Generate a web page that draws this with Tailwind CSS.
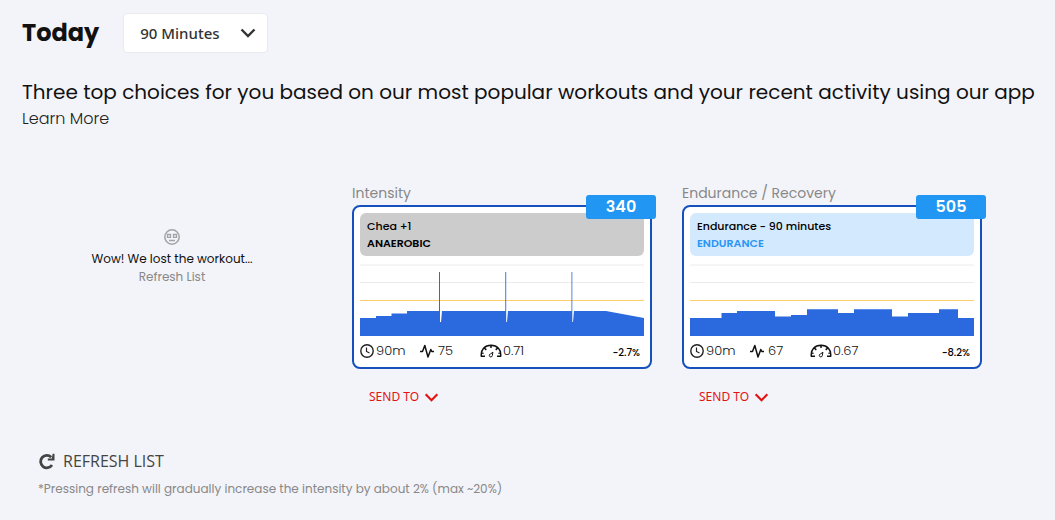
<!DOCTYPE html>
<html lang="en">
<head>
<meta charset="utf-8">
<meta name="viewport" content="width=device-width, initial-scale=1">
<title>Today</title>
<script src="https://cdn.jsdelivr.net/npm/@tailwindcss/browser@4"></script>
</head>
<body class="min-h-screen bg-[#f3f4f9] font-['Poppins','Inter',sans-serif] text-[#111]">
<svg class="hidden">
  <symbol id="clock" viewBox="0 0 14 14"><circle cx="7" cy="7" r="6.2" fill="none" stroke="#222" stroke-width="1.4"/><path d="M6.5 3.5V7.5L9.5 9" fill="none" stroke="#222" stroke-width="1.2"/></symbol>
  <symbol id="pulse" viewBox="0 0 14 14"><path d="M0 7.5H2.5L4.8 1.5L8 13L10.8 5.5L11.8 7.5H14" fill="none" stroke="#111" stroke-width="1.5" stroke-linejoin="round"/></symbol>
  <symbol id="gauge" viewBox="0 0 22 14"><path d="M5 12.3H1.4C0.4 5.5 5 1.2 11 1.2S21.6 5.5 20.6 12.3H17M11 1.5V4M4.6 4.2L6.3 5.9M17.4 4.2L15.7 5.9M1.5 8.8L3.6 9.4M20.5 8.8L18.4 9.4" fill="none" stroke="#111" stroke-width="1.5"/><path d="M12.9 8.2L12.3 11.6A1.5 1.5 0 1 1 10.4 10Z" fill="none" stroke="#111" stroke-width="1"/></symbol>
  <symbol id="chevron" viewBox="0 0 16 10"><path d="M1.5 1.5L8 8L14.5 1.5" fill="none" stroke="currentColor" stroke-width="2.4"/></symbol>
</svg>
<header class="flex items-center gap-6 pt-[13px] pl-[22px]">
  <h1 class="text-2xl font-bold">Today</h1>
  <div class="relative">
    <select aria-label="Duration" class="h-10 w-[145px] appearance-none rounded border border-[#e9eaee] bg-white pl-4 font-['Noto_Sans',sans-serif] text-[15px] font-medium text-[#333]"><option>90 Minutes</option></select>
    <svg class="pointer-events-none absolute top-[15px] right-3 h-[10px] w-4 text-[#333]"><use href="#chevron"/></svg>
  </div>
</header>
<main class="pl-[22px]">
  <p class="mt-6 text-xl leading-[30px] whitespace-nowrap">Three top choices for you based on our most popular workouts and your recent activity using our app</p>
  <a href="#" class="block w-fit text-base leading-6 font-light text-[#222]">Learn More</a>
  <div class="mt-[51px] flex gap-[30px]">
    <section class="flex w-[300px] shrink-0 flex-col items-center pt-[47px] text-xs leading-[18px]">
      <svg class="mb-[5px] h-4 w-4" viewBox="0 0 16 16" fill="none" stroke="#a2a3a6"><circle cx="8" cy="8" r="7.2" stroke-width="1.5"/><path d="M3.5 5.5H6.5V8.3H3.5ZM9.5 5.5H12.5V8.3H9.5ZM5 11.5H11" stroke-width="1.3"/></svg>
      <p>Wow! We lost the workout...</p>
      <button class="text-[#888]">Refresh List</button>
    </section>
    <section class="w-[300px] shrink-0">
      <h2 class="mb-px text-sm leading-[22px] text-[#888]">Intensity</h2>
      <article class="relative rounded-lg border-2 border-[#1550bd] bg-white px-1.5 pt-1.5 pb-px">
        <span class="absolute -top-3 -right-1.5 h-6 w-[70px] rounded-[3px] bg-[#2196f3] text-center text-base leading-6 font-semibold text-white">340</span>
        <div class="h-[43px] rounded-md bg-[#ccc] px-[7px] pt-[5px] text-[11px] leading-[17px] font-medium text-black"><p>Chea +1</p><p class="font-semibold">ANAEROBIC</p></div>
        <svg class="mt-2 block h-[72px] w-full" viewBox="0 0 284 72" preserveAspectRatio="none">
          <path d="M0 1H284M0 18.5H284" stroke="#ececec"/><path d="M0 36.5H284" stroke="#ffcf6b"/>
          <path d="M0 72V54H16V52H31.5V49.5H47V47H79V8H80V58H81L82 47H145.3V8H146.2V58H147L148 47H211.5V8H212.3V58H213L214 47H246L284 54V72Z" fill="#2b69de"/>
        </svg>
        <div class="flex h-[30px] items-center text-[13px] font-light text-[#111]">
          <span class="flex w-[60px] items-center gap-0.5"><svg class="h-3.5 w-3.5"><use href="#clock"/></svg>90m</span>
          <span class="flex w-[60px] items-center gap-1"><svg class="h-3.5 w-3.5"><use href="#pulse"/></svg>75</span>
          <span class="flex items-center gap-px"><svg class="h-3.5 w-[22px]"><use href="#gauge"/></svg>0.71</span>
          <span class="mt-0.5 mr-1 ml-auto text-[10px] font-medium text-black">-2.7%</span>
        </div>
      </article>
      <button class="mt-[19px] ml-[17px] flex items-center gap-[5px] font-['Noto_Sans',sans-serif] text-xs leading-[18px] text-[#e31313]">SEND TO<svg class="h-[9px] w-[15px]"><use href="#chevron"/></svg></button>
    </section>
    <section class="w-[300px] shrink-0">
      <h2 class="mb-px text-sm leading-[22px] text-[#888]">Endurance / Recovery</h2>
      <article class="relative rounded-lg border-2 border-[#1550bd] bg-white px-1.5 pt-1.5 pb-px">
        <span class="absolute -top-3 -right-1.5 h-6 w-[70px] rounded-[3px] bg-[#2196f3] text-center text-base leading-6 font-semibold text-white">505</span>
        <div class="h-[43px] rounded-md bg-[#d3e9fd] px-[7px] pt-[5px] text-[11px] leading-[17px] font-medium text-black"><p>Endurance - 90 minutes</p><p class="font-semibold text-[#2b95f5]">ENDURANCE</p></div>
        <svg class="mt-2 block h-[72px] w-full" viewBox="0 0 284 72" preserveAspectRatio="none">
          <path d="M0 1H284M0 18.5H284" stroke="#ececec"/><path d="M0 36.5H284" stroke="#ffcf6b"/>
          <path d="M0 72V54H31.5V49H47V47H85V52.5H101V51H117V45.2H148V49H164V45.2H202V52.5H218V49H249V45.2H268V54H284V72Z" fill="#2b69de"/>
        </svg>
        <div class="flex h-[30px] items-center text-[13px] font-light text-[#111]">
          <span class="flex w-[60px] items-center gap-0.5"><svg class="h-3.5 w-3.5"><use href="#clock"/></svg>90m</span>
          <span class="flex w-[60px] items-center gap-1"><svg class="h-3.5 w-3.5"><use href="#pulse"/></svg>67</span>
          <span class="flex items-center gap-px"><svg class="h-3.5 w-[22px]"><use href="#gauge"/></svg>0.67</span>
          <span class="mt-0.5 mr-1 ml-auto text-[10px] font-medium text-black">-8.2%</span>
        </div>
      </article>
      <button class="mt-[19px] ml-[17px] flex items-center gap-[5px] font-['Noto_Sans',sans-serif] text-xs leading-[18px] text-[#e31313]">SEND TO<svg class="h-[9px] w-[15px]"><use href="#chevron"/></svg></button>
    </section>
  </div>
  <div class="mt-[43px] pl-4">
    <button class="flex items-center gap-2 font-['Open_Sans',sans-serif] text-base leading-6 text-[#444]">
      <svg class="h-[17px] w-[17px]" viewBox="0 0 17 17"><path d="M13.2 4.2A6.2 6.2 0 1 0 14 12" fill="none" stroke="#444" stroke-width="2.8"/><path d="M16.5 0.8V7.4H9.8V5.4H13.8L14.6 0.8Z" fill="#444"/></svg>REFRESH LIST</button>
    <p class="mt-[7px] text-xs leading-[18px] text-[#888]">*Pressing refresh will gradually increase the intensity by about 2% (max ~20%)</p>
  </div>
</main>
</body>
</html>
